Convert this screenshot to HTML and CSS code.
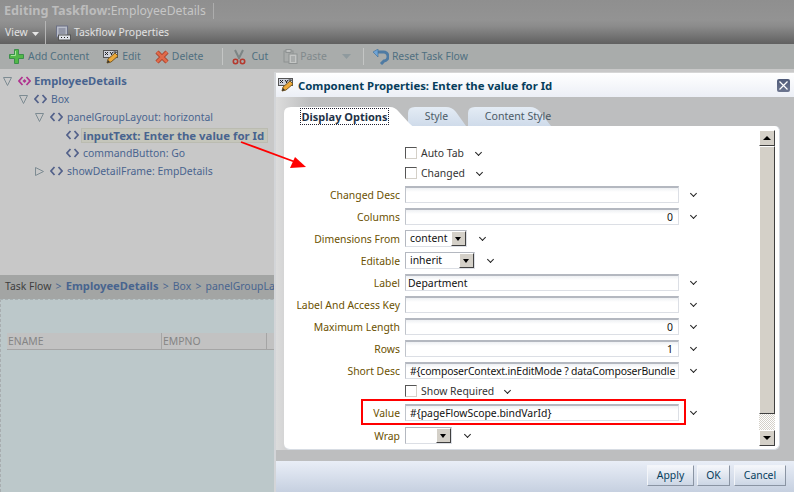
FILE: index.html
```html
<!DOCTYPE html>
<html lang="en">
<head>
<meta charset="utf-8">
<title>Editing Taskflow</title>
<link rel="stylesheet" href="styles.css">
</head>
<body>
<div class="page">
  <header class="head">
    <div class="title-row"><h1 class="title"><b>Editing Taskflow:</b>EmployeeDetails</h1><span class="title-sep"></span></div>
    <div class="view-row">
      <span class="view">View</span><svg class="view-caret" width="7" height="4"><path d="M0 0h7L3.5 4z" fill="#e6e6e6"/></svg>
      <span class="view-sep"></span>
      <svg class="ico" width="16" height="16" viewBox="0 0 16 16"><rect x="1.500" y="1" width="11" height="11" fill="#b9bdc9" stroke="#6c7186"/><path d="M3.500 4h7M3.500 6h7M3.500 8h7" stroke="#6c7186"/><rect x="3.500" y="10" width="12" height="5" fill="#dfe2ea" stroke="#555"/><path d="M6 12.500h1M9 12.500h1M12 12.500h1" stroke="#222"/></svg>
      <span class="view-label">Taskflow Properties</span>
    </div>
  </header>
  <div class="toolbar">
    <span class="tool"><svg width="15" height="15" viewBox="0 0 15 15"><path d="M5.500 .5h4v5h5v4h-5v5h-4v-5h-5v-4h5z" fill="#52b848" stroke="#3b8f4a"/><path d="M6.500 2v4.500H2" fill="none" stroke="#a6e69a"/></svg>Add Content</span>
    <span class="tool tool-edit"><svg width="16" height="16" viewBox="0 0 16 16"><rect x="0.500" y="1.500" width="14" height="7" fill="#cfd2dc" stroke="#555"/><path d="M2 3l3 3M5 3L2 6M7 3l1.500 2v1M10 3L8.500 5M10.500 3h3l-3 3h3" stroke="#222" fill="none"/><path d="M4 14l1-4 7-6 3 3-7 6z" fill="#eda93a" stroke="#7a5a22"/><path d="M4 14l1-3 2 2z" fill="#333"/></svg>Edit</span>
    <span class="tool tool-del"><svg width="14" height="14" viewBox="0 0 14 14"><path d="M2 2l10 10M12 2L2 12" stroke="#a8452f" stroke-width="4.500"/><path d="M2 2l10 10M12 2L2 12" stroke="#e06a4a" stroke-width="2.500"/></svg>Delete</span>
    <span class="tool-sep sep-a"></span>
    <span class="tool tool-cut"><svg width="14" height="16" viewBox="0 0 14 16"><path d="M3 1l4.500 9M11 1L6.500 10" stroke="#7d8585" stroke-width="2"/><circle cx="3.500" cy="12.500" r="2.200" fill="none" stroke="#b5392e" stroke-width="1.600"/><circle cx="10.500" cy="12.500" r="2.200" fill="none" stroke="#b5392e" stroke-width="1.600"/></svg>Cut</span>
    <span class="tool tool-paste"><svg width="15" height="15" viewBox="0 0 15 15"><rect x="1" y="2" width="9" height="11" fill="#a9acab" stroke="#8e9292"/><rect x="3" y="0.500" width="5" height="3" fill="#bfc1c0" stroke="#8e9292"/><rect x="6" y="5" width="8" height="9.500" fill="#c4c6c5" stroke="#8e9292"/><path d="M8 8h4M8 10h4M8 12h4" stroke="#8e9292"/></svg>Paste</span>
    <svg class="paste-caret" width="9" height="5"><path d="M0 0h9L4.500 5z" fill="#8f9a9e"/></svg>
    <span class="tool-sep sep-b"></span>
    <span class="tool tool-reset"><svg width="16" height="16" viewBox="0 0 16 16"><path d="M5 3h5a4.500 4.500 0 0 1 1 9l-3 3" fill="none" stroke="#4f7ba3" stroke-width="3"/><path d="M0 3l5-3v8z" fill="#6fa4d6" stroke="#3d6b96" stroke-width=".6"/></svg>Reset Task Flow</span>
  </div>
  <ul class="tree">
    <li class="node lvl0 root"><svg class="tw" width="9" height="9"><path d="M.5.500h8L4.500 8.500z" fill="none" stroke="#7d8b92"/></svg><svg class="tag" width="13" height="10" viewBox="0 0 13 10"><path d="M4.500 1L1 5l3.500 4M8.500 1L12 5 8.500 9" fill="none" stroke="#b0338f" stroke-width="1.700"/><path d="M6.500 3l2 2-2 2-2-2z" fill="#b0338f"/></svg><span>EmployeeDetails</span></li>
    <li class="node lvl1"><svg class="tw" width="9" height="9"><path d="M.5.500h8L4.500 8.500z" fill="none" stroke="#7d8b92"/></svg><svg class="tag" width="13" height="10" viewBox="0 0 13 10"><path d="M4.500 1L1 5l3.500 4M8.500 1L12 5 8.500 9" fill="none" stroke="#53618a" stroke-width="1.700"/></svg><span>Box</span></li>
    <li class="node lvl2"><svg class="tw" width="9" height="9"><path d="M.5.500h8L4.500 8.500z" fill="none" stroke="#7d8b92"/></svg><svg class="tag" width="13" height="10" viewBox="0 0 13 10"><path d="M4.500 1L1 5l3.500 4M8.500 1L12 5 8.500 9" fill="none" stroke="#53618a" stroke-width="1.700"/></svg><span>panelGroupLayout: horizontal</span></li>
    <li class="node lvl3 selected"><svg class="tag" width="13" height="10" viewBox="0 0 13 10"><path d="M4.500 1L1 5l3.500 4M8.500 1L12 5 8.500 9" fill="none" stroke="#53618a" stroke-width="1.700"/></svg><span>inputText: Enter the value for Id</span></li>
    <li class="node lvl3"><svg class="tag" width="13" height="10" viewBox="0 0 13 10"><path d="M4.500 1L1 5l3.500 4M8.500 1L12 5 8.500 9" fill="none" stroke="#53618a" stroke-width="1.700"/></svg><span>commandButton: Go</span></li>
    <li class="node lvl2"><svg class="tw" width="9" height="9"><path d="M.5.500l8 4-8 4z" fill="none" stroke="#7d8b92"/></svg><svg class="tag" width="13" height="10" viewBox="0 0 13 10"><path d="M4.500 1L1 5l3.500 4M8.500 1L12 5 8.500 9" fill="none" stroke="#53618a" stroke-width="1.700"/></svg><span>showDetailFrame: EmpDetails</span></li>
  </ul>
  <nav class="crumbs"><span class="crumb-first">Task Flow</span> &gt; <b>EmployeeDetails</b> &gt; Box &gt; panelGroupLayout: horizontal</nav>
  <section class="canvas">
    <div class="grid-head"><span class="col col-name">ENAME</span><span class="col col-no">EMPNO</span></div>
  </section>
</div>

<aside class="dialog">
  <div class="dlg-title">
    <svg width="16" height="16" viewBox="0 0 16 16"><rect x="0.500" y="1.500" width="14" height="7" fill="#cfd2dc" stroke="#555"/><path d="M2 3l3 3M5 3L2 6M7 3l1.500 2v1M10 3L8.500 5M10.500 3h3l-3 3h3" stroke="#222" fill="none"/><path d="M4 14l1-4 7-6 3 3-7 6z" fill="#eda93a" stroke="#7a5a22"/><path d="M4 14l1-3 2 2z" fill="#333"/></svg>
    <h2>Component Properties: Enter the value for Id</h2>
    <span class="close"><svg width="9" height="9"><path d="M.5.500l8 8M8.500.500l-8 8" stroke="#fff" stroke-width="1.200"/></svg></span>
  </div>
  <div class="dlg-body">
    <div class="tabs">
      <div class="tab tab-on"><svg class="tab-bg" viewBox="0 0 130 20" preserveAspectRatio="none"><path d="M0 20V6Q0 0 7 0H106Q111 0 115 5L125 16Q128 19 130 20z" fill="#fff"/></svg><span class="tab-text">Display Options</span></div>
      <div class="tab tab-style"><svg class="tab-bg" viewBox="0 0 60 20" preserveAspectRatio="none"><defs><linearGradient id="t1" x1="0" y1="0" x2="0" y2="1"><stop offset="0" stop-color="#e4ecf5"/><stop offset="1" stop-color="#cfdbea"/></linearGradient></defs><path d="M0 19V6Q0 0 7 0H38Q44 0 48 5L58 19z" fill="url(#t1)"/></svg><span class="tab-text">Style</span></div>
      <div class="tab tab-content"><svg class="tab-bg" viewBox="0 0 84 20" preserveAspectRatio="none"><path d="M0 19V6Q0 0 7 0H62Q68 0 72 5L83 19z" fill="url(#t1)"/></svg><span class="tab-text">Content Style</span></div>
    </div>
    <div class="panel">
      <form class="form">
        <span class="lab"></span><span class="fld check"><i class="box"></i>Auto Tab<i class="chev"></i></span>
        <span class="lab"></span><span class="fld check"><i class="box"></i>Changed<i class="chev"></i></span>
        <span class="lab">Changed Desc</span><span class="fld"><i class="input"></i><i class="chev chev-in"></i></span>
        <span class="lab">Columns</span><span class="fld"><i class="input num">0</i><i class="chev chev-in"></i></span>
        <span class="lab">Dimensions From</span><span class="fld"><i class="select sel-dim">content<i class="sel-btn"></i></i><i class="chev chev-sel"></i></span>
        <span class="lab">Editable</span><span class="fld"><i class="select sel-edit">inherit<i class="sel-btn"></i></i><i class="chev chev-sel"></i></span>
        <span class="lab">Label</span><span class="fld"><i class="input tight">Department</i><i class="chev chev-in"></i></span>
        <span class="lab">Label And Access Key</span><span class="fld"><i class="input"></i><i class="chev chev-in"></i></span>
        <span class="lab">Maximum Length</span><span class="fld"><i class="input num">0</i><i class="chev chev-in"></i></span>
        <span class="lab">Rows</span><span class="fld"><i class="input num">1</i><i class="chev chev-in"></i></span>
        <span class="lab">Short Desc</span><span class="fld"><i class="input snug">#{composerContext.inEditMode ? dataComposerBundle</i><i class="chev chev-in"></i></span>
        <span class="lab"></span><span class="fld check"><i class="box"></i>Show Required<i class="chev chev-wide"></i></span>
        <span class="lab">Value</span><span class="fld"><i class="input">#{pageFlowScope.bindVarId}</i><i class="chev chev-in"></i></span>
        <span class="lab">Wrap</span><span class="fld"><i class="select sel-wrap"><i class="sel-btn"></i></i><i class="chev chev-sel"></i></span>
      </form>
      <div class="scrollbar">
        <span class="sb-btn"><i class="arrow-up"></i></span>
        <span class="sb-thumb"></span>
        <span class="sb-track"></span>
        <span class="sb-btn"><i class="arrow-down"></i></span>
      </div>
    </div>
  </div>
  <footer class="dlg-foot">
    <button class="btn btn-apply" type="button">Apply</button>
    <button class="btn btn-ok" type="button">OK</button>
    <button class="btn btn-cancel" type="button">Cancel</button>
  </footer>
</aside>

<span class="value-mark"></span>
<svg class="arrow" width="80" height="40" viewBox="0 0 80 40"><path d="M1 1L58 22" stroke="#f00" stroke-width="1.800"/><path d="M66 26L50 27L55 16z" fill="#f00"/></svg>
</body>
</html>
```
FILE: styles.css
```css
* { box-sizing: border-box; }
html, body { margin: 0; padding: 0; }
body {
  position: relative;
  width: 794px;
  height: 492px;
  overflow: hidden;
  font: 10.400px/13px "Noto Sans", Arial, sans-serif;
  background: #c8c8c8;
}
i { font-style: normal; }
.page { display: flex; flex-direction: column; width: 794px; height: 492px; }

/* page header */
.head { height: 44px; background: linear-gradient(#8f8f8f 0, #939393 45%, #8b8b8b 60%, #606060 100%); color: #e4e4e4; }
.title-row { height: 21px; display: flex; align-items: center; padding-left: 4px; }
.title { margin: 0; font-size: 12.200px; font-weight: 400; color: #c6c6c6; line-height: 18px; }
.title b { color: #bcbcbc; font-size: 12.700px; }
.title-sep { width: 1px; height: 16px; margin-left: 7px; background: #adadad; }
.view-row { height: 23px; display: flex; align-items: center; padding-left: 5px; }
.view { color: #e2e2e2; width: 27px; }
.view-caret { margin-top: 3px; }
.view-sep { width: 1px; height: 23px; background: #b5b5b5; margin: 0 9px 0 6px; }
.view-label { margin-left: 3px; color: #e2e2e2; }

/* toolbar */
.toolbar { height: 25px; flex: none; display: flex; align-items: center; padding-left: 9px; background: #a9acab; color: #4f6f80; }
.tool { display: inline-flex; align-items: center; gap: 4px; }
.tool-edit { margin-left: 14px; gap: 3px; }
.tool-del { margin-left: 14px; gap: 3px; }
.tool-sep { width: 1px; height: 17px; background: #c4c6c5; }
.sep-a { margin: 0 9px 0 19px; }
.tool-cut { gap: 5px; }
.tool-paste { margin-left: 15px; color: #80898c; gap: 2px; }
.paste-caret { margin-left: 15px; }
.sep-b { margin: 0 9px 0 12px; }
.tool-reset { gap: 3px; }

/* tree */
.tree { margin: 0; padding: 3px 0 0; list-style: none; height: 206px; flex: none; background: #c8c8c8; color: #48648f; }
.node { height: 18px; display: flex; align-items: center; white-space: nowrap; }
.tw { flex: none; margin-right: 6px; }
.tag { flex: none; margin-right: 4px; }
.lvl0 { padding-left: 3px; }
.lvl1 { padding-left: 19px; }
.lvl2 { padding-left: 35px; }
.lvl3 { padding-left: 66px; }
.root span { font-weight: 700; font-size: 11.200px; line-height: 12px; padding-bottom: 1px; }
.root .tag { margin-right: 3px; }
.selected .tag { margin-right: 2px; }
.selected span { width: 187px; height: 15px; line-height: 13px; padding-left: 1px; font-weight: 700; font-size: 11.400px; background: #c5c6bb; border: 1px solid #bbbcb1; }

/* crumbs + canvas */
.crumbs { height: 24px; flex: none; padding-left: 5px; line-height: 22px; background: #a3a5a4; color: #48648f; white-space: nowrap; overflow: hidden; word-spacing: 1.500px; }
.crumb-first { color: #3e3e3e; word-spacing: 0; }
.crumbs b { font-size: 11.200px; }
.canvas { flex: 1; padding: 33px 0 0 6px; background: #bcc8ca; border-top: 1px dashed #a8b0b2; border-left: 1px dashed #a8aeb0; }
.grid-head { display: flex; height: 17px; width: 267px; background: #c2c2c2; border-bottom: 1px solid #a5a5a5; color: #858585; line-height: 16px; }
.col { padding-left: 1px; border-right: 1px solid #a5a5a5; }
.col-name { width: 155px; }
.col-no { width: 105px; }

/* dialog */
.dialog { position: absolute; left: 274px; top: 72px; width: 520px; height: 420px; display: flex; flex-direction: column; background: #bdbebf; border-left: 2px solid #d3d5d8; border-top: 1px solid #d6d6d6; }
.dlg-title { height: 24px; flex: none; display: flex; align-items: center; padding: 0 4px 0 2px; gap: 4px; background: linear-gradient(#fff, #eceff6); }
.dlg-title h2 { margin: 0; flex: 1; font-size: 11.350px; font-weight: 700; color: #063d5c; }
.close { width: 13px; height: 13px; display: flex; align-items: center; justify-content: center; background: linear-gradient(#4f5a78, #6d7690); border-radius: 2px; }
.dlg-body { flex: 1; padding: 10px 0 0 8px; background: linear-gradient(90deg, #dcdcdc 0, #bdbebf 34px); }
.tabs { display: flex; height: 20px; margin-bottom: -1px; position: relative; z-index: 1; }
.tab { position: relative; height: 20px; text-align: center; line-height: 19px; color: #4b5a66; }
.tab-bg { position: absolute; left: 0; top: 0; width: 100%; height: 100%; }
.tab-text { position: relative; }
.tab-on { width: 130px; margin-right: -6px; color: #1f3347; font-weight: 700; font-size: 11px; padding-right: 9px; z-index: 1; }
.tab-on .tab-text { outline: 1px dotted #223; outline-offset: 0; }
.tab-style { width: 60px; padding-right: 3px; }
.tab-content { width: 84px; padding-left: 16px; font-size: 10.600px; }
.panel { width: 496px; height: 324px; display: flex; background: #fff; border-radius: 0 5px 6px 6px; padding: 4px 4px 3px 0; border-bottom: 1px solid #d7dce3; border-right: 1px solid #d7dce3; }
.form { flex: 1; display: grid; grid-template-columns: 116px 1fr; grid-template-rows: 20px 20px 22px 22px 22px 22px 22px 22px 22px 22px 22px 20px 22px 24px; column-gap: 5px; padding-top: 13px; align-content: start; color: #222; }
.lab { color: #6b5100; text-align: right; align-self: center; white-space: nowrap; padding-top: 2px; }
.fld { display: flex; align-items: center; white-space: nowrap; color: #333; }
.box { width: 12px; height: 12px; margin-right: 4px; background: #fff; border: 1px solid #d4d0c8; border-top-color: #555; border-left-color: #555; }
.input { width: 274px; height: 17px; padding: 0 2px 0 4px; line-height: 15px; color: #111; background: linear-gradient(#eef0f3 0, #fff 4px); border: 1px solid #dcdfe5; border-top: 2px solid #b4b8c0; border-left-color: #c0c4cb; white-space: nowrap; overflow: hidden; }
.tight { padding-left: 2px; }
.snug { letter-spacing: -0.150px; }
.num { text-align: right; padding-right: 5px; }
.select { position: relative; height: 17px; padding-left: 4px; line-height: 15px; color: #111; border: 1px solid #dcdfe5; border-top-color: #b4b8c0; border-left-color: #b4b8c0; background: #fff; }
.sel-dim { width: 62px; }
.sel-edit { width: 70px; }
.sel-wrap { width: 47px; }
.sel-btn { position: absolute; right: 0; top: 0; width: 15px; height: 15px; background: #d4d0c8; border: 1px solid #fff; border-right-color: #404040; border-bottom-color: #404040; }
.sel-btn::after { content: ""; position: absolute; left: 3px; top: 5px; border: 3px solid transparent; border-top: 4px solid #000; border-bottom: 0; }
.chev { width: 5px; height: 5px; margin: -2px 0 0 12px; border-right: 1px solid #222; border-bottom: 1px solid #222; transform: rotate(45deg); }
.chev-in { margin-left: 12px; }
.chev-sel { margin-left: 13px; }
.chev-wide { margin-left: 11px; }
.scrollbar { width: 16px; flex: none; display: flex; flex-direction: column; }
.sb-btn { height: 16px; flex: none; display: flex; align-items: center; justify-content: center; background: #d4d0c8; border: 1px solid #fff; border-right-color: #404040; border-bottom-color: #404040; }
.arrow-up { border: 4px solid transparent; border-bottom: 4px solid #000; border-top: 0; }
.arrow-down { border: 4px solid transparent; border-top: 4px solid #000; border-bottom: 0; }
.sb-thumb { height: 268px; flex: none; background: #d4d0c8; border: 1px solid #fff; border-right-color: #404040; border-bottom-color: #404040; }
.sb-track { flex: 1; background: repeating-conic-gradient(#d4d0c8 0 25%, #fff 0 50%) 0 0 / 2px 2px; }
.dlg-foot { height: 31px; flex: none; margin-top: 11px; display: flex; align-items: center; justify-content: flex-end; padding: 0 8px 3px 0; gap: 3px; background: linear-gradient(#e9eef7, #c6d0e0); }
.btn { height: 21px; padding: 0; font: inherit; line-height: 18px; color: #063d5c; background: linear-gradient(#f4f6fa, #ccd6e5); border: 1px solid #f3f5f9; border-right-color: #8a94a3; border-bottom-color: #8a94a3; }
.btn-apply { width: 47px; }
.btn-ok { width: 33px; }
.btn-cancel { width: 52px; margin-left: 1px; }

/* annotations */
.value-mark { position: absolute; left: 361px; top: 399px; width: 325px; height: 26px; border: 2px solid #f00; }
.arrow { position: absolute; left: 240px; top: 141px; }
```
